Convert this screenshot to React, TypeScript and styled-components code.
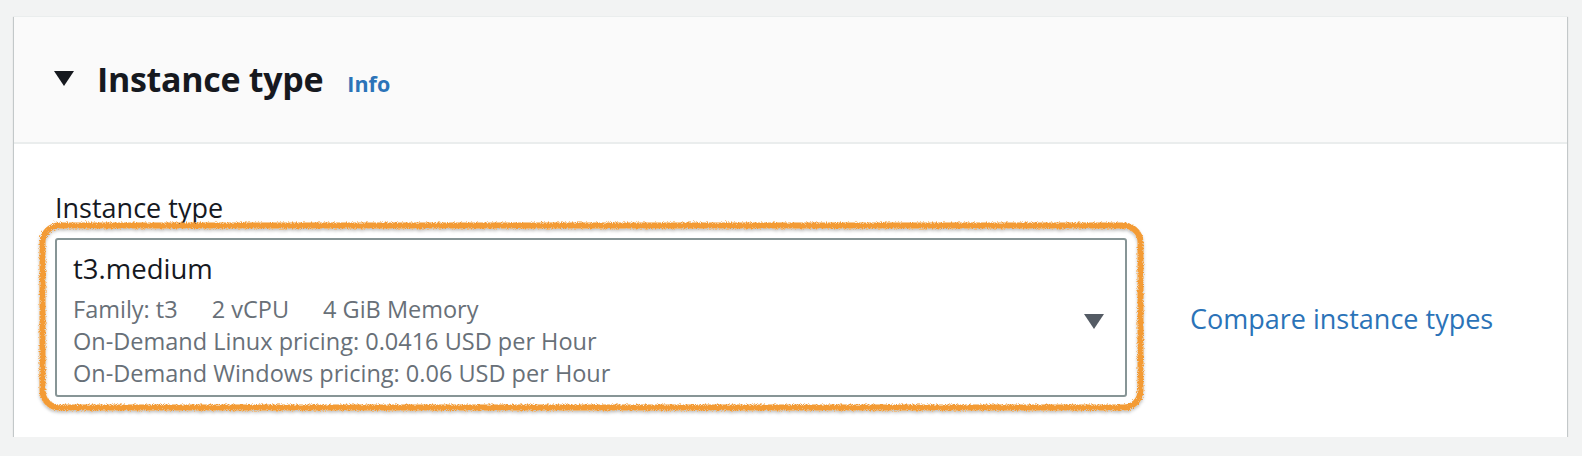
import React from "react";
import styled, { createGlobalStyle } from "styled-components";

const GlobalStyle = createGlobalStyle`
  html, body { margin: 0; padding: 0; }
  body {
    background: #f2f3f3;
    font-family: "Open Sans", "Noto Sans", sans-serif;
    color: #16191f;
  }
`;

const Page = styled.div`
  padding: 16px 15px 0 14px;
`;

const Card = styled.section`
  background: #ffffff;
  border-top: 1px solid #eaeded;
  box-shadow: 0 1px 1px 0 rgba(0, 28, 36, 0.3), 1px 1px 1px 0 rgba(0, 28, 36, 0.15),
    -1px 1px 1px 0 rgba(0, 28, 36, 0.15);
`;

const Header = styled.div`
  height: 127px;
  background: #fafafa;
  border-bottom: 2px solid #eaeded;
  display: flex;
  align-items: center;
  padding-left: 40px;
  padding-bottom: 2px;
  box-sizing: border-box;
  gap: 23px;
`;

const Caret = styled.svg<{ $w: number; $h: number; $color: string }>`
  width: ${(p) => p.$w}px;
  height: ${(p) => p.$h}px;
  flex: none;
  fill: ${(p) => p.$color};
`;

const TitleGroup = styled.div`
  display: flex;
  align-items: baseline;
  gap: 24px;
`;

const Title = styled.h2`
  margin: 0;
  font-size: 34px;
  font-weight: 700;
  line-height: 44px;
  color: #16191f;
  letter-spacing: -0.3px;
`;

const InfoLink = styled.a`
  font-size: 21.5px;
  font-weight: 700;
  color: #2b73b8;
  text-decoration: none;
`;

const Body = styled.div`
  padding: 46px 40px 40px 41px;
`;

const Label = styled.div`
  font-size: 27px;
  line-height: 36px;
  color: #16191f;
  margin-bottom: 12px;
`;

const Row = styled.div`
  display: flex;
  align-items: center;
  gap: 63px;
`;

const SelectWrap = styled.div`
  position: relative;
  width: 1072px;
`;

const Select = styled.div`
  box-sizing: border-box;
  height: 159px;
  border: 2px solid #879596;
  border-radius: 3px;
  background: #fff;
  display: flex;
  align-items: center;
  padding: 7px 21px 0 16px;
`;

const Option = styled.div`
  flex: 1;
  display: flex;
  flex-direction: column;
`;

const OptionTitle = styled.div`
  font-size: 27.5px;
  line-height: 34px;
  color: #16191f;
  margin-bottom: 8px;
`;

const Meta = styled.div`
  font-size: 23.5px;
  line-height: 31.7px;
  color: #687078;
  display: flex;
  gap: 34px;
`;

const Highlight = styled.svg`
  position: absolute;
  left: -15px;
  top: -15px;
  width: calc(100% + 31px);
  height: calc(100% + 28px);
  overflow: visible;
  pointer-events: none;
`;

const CompareLink = styled.a`
  font-size: 27px;
  color: #2b73b8;
  text-decoration: none;
  margin-top: 2px;
`;

export default function App() {
  return (
    <>
      <GlobalStyle />
      <Page>
        <Card>
          <Header>
            <Caret $w={20} $h={15} $color="#16191f" viewBox="0 0 20 15">
              <polygon points="0,0 20,0 10,15" />
            </Caret>
            <TitleGroup>
              <Title>Instance type</Title>
              <InfoLink>Info</InfoLink>
            </TitleGroup>
          </Header>
          <Body>
            <Label>Instance type</Label>
            <Row>
              <SelectWrap>
                <Select>
                  <Option>
                    <OptionTitle>t3.medium</OptionTitle>
                    <Meta>
                      <span>Family: t3</span>
                      <span>2 vCPU</span>
                      <span>4 GiB Memory</span>
                    </Meta>
                    <Meta>On-Demand Linux pricing: 0.0416 USD per Hour</Meta>
                    <Meta>On-Demand Windows pricing: 0.06 USD per Hour</Meta>
                  </Option>
                  <Caret $w={20} $h={15} $color="#545b64" viewBox="0 0 20 15">
                    <polygon points="0,0 20,0 10,15" />
                  </Caret>
                </Select>
                <Highlight>
                  <defs>
                    <filter id="rough" x="-5%" y="-10%" width="110%" height="120%">
                      <feTurbulence type="fractalNoise" baseFrequency="1.2" numOctaves="2" seed="5" result="n" />
                      <feDisplacementMap in="SourceGraphic" in2="n" scale="4.5" result="d" />
                      <feDropShadow dx="0" dy="2" stdDeviation="1.5" floodColor="#000" floodOpacity="0.25" />
                    </filter>
                  </defs>
                  <rect
                    x="2.5"
                    y="2.5"
                    width="1098"
                    height="182"
                    rx="17"
                    ry="17"
                    fill="none"
                    stroke="#f39b35"
                    strokeWidth="6"
                    filter="url(#rough)"
                  />
                </Highlight>
              </SelectWrap>
              <CompareLink>Compare instance types</CompareLink>
            </Row>
          </Body>
        </Card>
      </Page>
    </>
  );
}
